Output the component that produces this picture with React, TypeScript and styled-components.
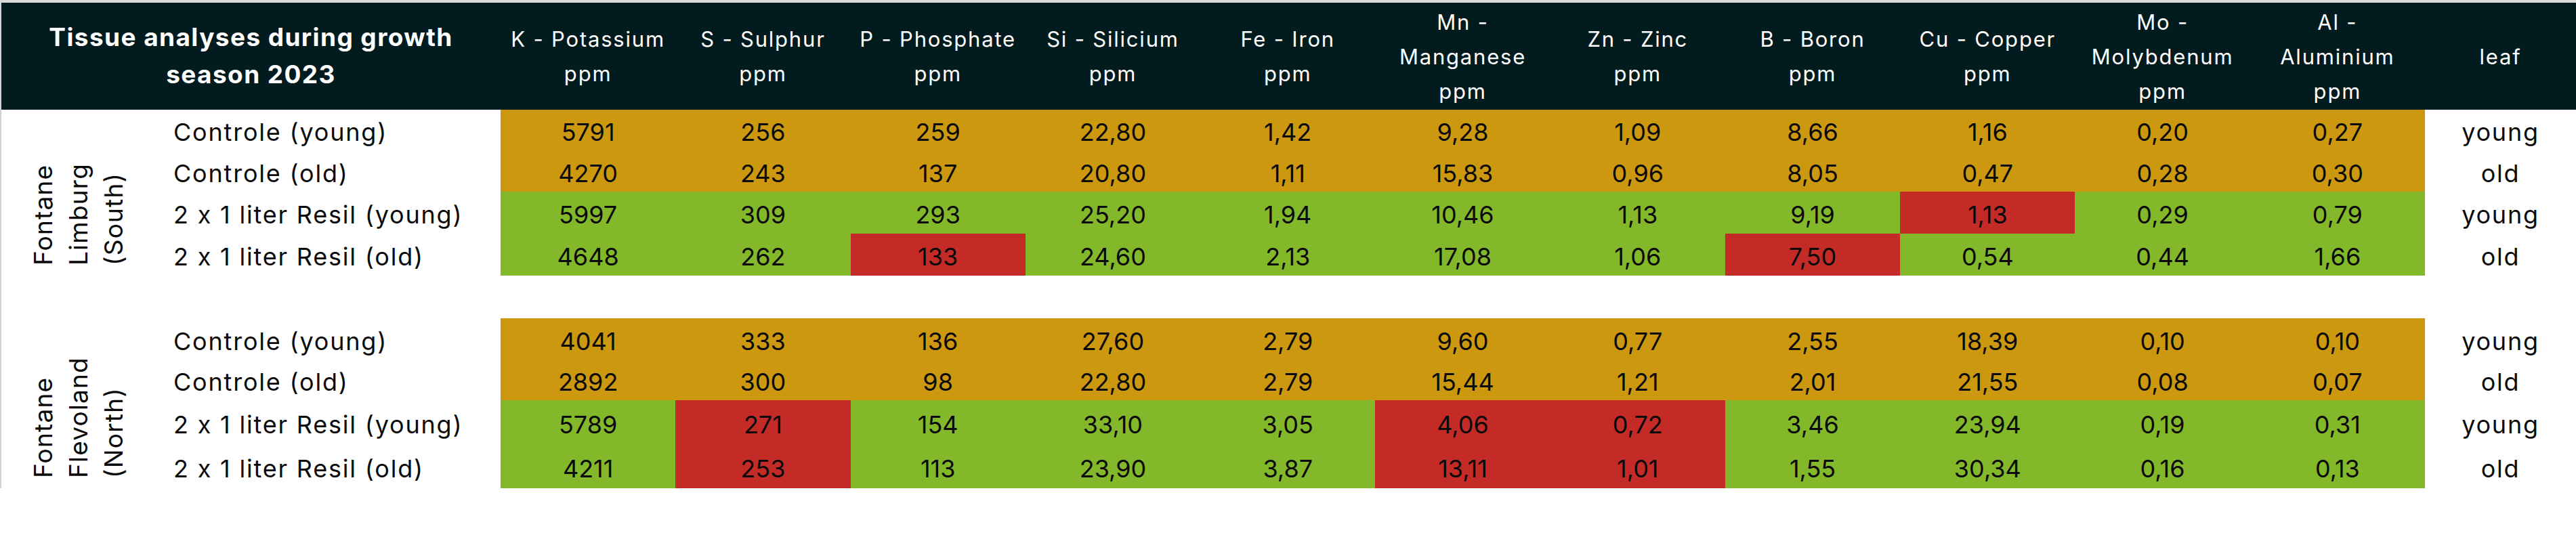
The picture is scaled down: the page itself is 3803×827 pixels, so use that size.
import React from 'react';
import styled, { createGlobalStyle } from 'styled-components';

const GlobalStyle = createGlobalStyle`
  html, body {
    margin: 0;
    padding: 0;
    background: #ffffff;
  }
  body {
    font-family: Inter, "Open Sans", "Liberation Sans", sans-serif;
    color: #0a0a0a;
  }
  * { box-sizing: border-box; }
`;

const COLS = '238px 499px repeat(11, minmax(0, 1fr)) 223px';

const COLORS = {
  header: '#021b1e',
  control: '#cb980f',
  resil: '#83b82a',
  low: '#c42b27',
};

type Tone = 'control' | 'resil';

interface RowData {
  label: string;
  leaf: string;
  tone: Tone;
  values: string[];
  low?: number[];
}

interface GroupData {
  region: string[];
  rows: RowData[];
  heights: number[];
}

const HEADERS: string[][] = [
  ['K - Potassium', 'ppm'],
  ['S - Sulphur', 'ppm'],
  ['P - Phosphate', 'ppm'],
  ['Si - Silicium', 'ppm'],
  ['Fe - Iron', 'ppm'],
  ['Mn -', 'Manganese', 'ppm'],
  ['Zn - Zinc', 'ppm'],
  ['B - Boron', 'ppm'],
  ['Cu - Copper', 'ppm'],
  ['Mo -', 'Molybdenum', 'ppm'],
  ['Al -', 'Aluminium', 'ppm'],
];

const GROUPS: GroupData[] = [
  {
    region: ['Fontane', 'Limburg', '(South)'],
    heights: [60, 61, 62, 62],
    rows: [
      {
        label: 'Controle (young)',
        leaf: 'young',
        tone: 'control',
        values: ['5791', '256', '259', '22,80', '1,42', '9,28', '1,09', '8,66', '1,16', '0,20', '0,27'],
      },
      {
        label: 'Controle (old)',
        leaf: 'old',
        tone: 'control',
        values: ['4270', '243', '137', '20,80', '1,11', '15,83', '0,96', '8,05', '0,47', '0,28', '0,30'],
      },
      {
        label: '2 x 1 liter Resil (young)',
        leaf: 'young',
        tone: 'resil',
        values: ['5997', '309', '293', '25,20', '1,94', '10,46', '1,13', '9,19', '1,13', '0,29', '0,79'],
        low: [8],
      },
      {
        label: '2 x 1 liter Resil (old)',
        leaf: 'old',
        tone: 'resil',
        values: ['4648', '262', '133', '24,60', '2,13', '17,08', '1,06', '7,50', '0,54', '0,44', '1,66'],
        low: [2, 7],
      },
    ],
  },
  {
    region: ['Fontane', 'Flevoland', '(North)'],
    heights: [61, 60, 65, 65],
    rows: [
      {
        label: 'Controle (young)',
        leaf: 'young',
        tone: 'control',
        values: ['4041', '333', '136', '27,60', '2,79', '9,60', '0,77', '2,55', '18,39', '0,10', '0,10'],
      },
      {
        label: 'Controle (old)',
        leaf: 'old',
        tone: 'control',
        values: ['2892', '300', '98', '22,80', '2,79', '15,44', '1,21', '2,01', '21,55', '0,08', '0,07'],
      },
      {
        label: '2 x 1 liter Resil (young)',
        leaf: 'young',
        tone: 'resil',
        values: ['5789', '271', '154', '33,10', '3,05', '4,06', '0,72', '3,46', '23,94', '0,19', '0,31'],
        low: [1, 5, 6],
      },
      {
        label: '2 x 1 liter Resil (old)',
        leaf: 'old',
        tone: 'resil',
        values: ['4211', '253', '113', '23,90', '3,87', '13,11', '1,01', '1,55', '30,34', '0,16', '0,13'],
        low: [1, 5, 6],
      },
    ],
  },
];

const Page = styled.div`
  width: 3803px;
  min-height: 827px;
  background: #ffffff;
`;

const TopRule = styled.div`
  height: 4px;
  background: #d9d9d9;
`;

const Table = styled.div`
  border-left: 2px solid #d3d3d3;
`;

const HeaderRow = styled.div`
  display: grid;
  grid-template-columns: ${COLS};
  height: 158px;
  background: ${COLORS.header};
  color: #ffffff;
`;

const TitleCell = styled.div`
  grid-column: 1 / 3;
  display: flex;
  align-items: center;
  justify-content: center;
  text-align: center;
  font-weight: 700;
  font-size: 37px;
  line-height: 55px;
  letter-spacing: 1.4px;
  padding-bottom: 2px;
`;

const HeaderCell = styled.div`
  display: flex;
  align-items: center;
  justify-content: center;
  text-align: center;
  font-size: 31px;
  line-height: 51px;
  letter-spacing: 1.8px;
  font-weight: 400;
  white-space: nowrap;
`;

const Group = styled.section<{ $rows: string }>`
  display: grid;
  grid-template-columns: ${COLS};
  grid-template-rows: ${(p) => p.$rows};
`;

const Spacer = styled.div`
  height: 63px;
`;

const RegionCell = styled.div`
  grid-column: 1;
  grid-row: 1 / -1;
  display: flex;
  align-items: stretch;
  padding-left: 36px;
`;

const RegionLabel = styled.div`
  writing-mode: vertical-rl;
  transform: rotate(180deg);
  font-size: 37px;
  line-height: 52px;
  letter-spacing: 1.2px;
  padding-top: 15px;
  white-space: nowrap;
  color: #0a0a0a;
`;

const LabelCell = styled.div`
  display: flex;
  align-items: center;
  padding-left: 16px;
  padding-top: 6px;
  font-size: 36px;
  letter-spacing: 1.8px;
  white-space: nowrap;
`;

const ValueCell = styled.div<{ $bg: string }>`
  display: flex;
  align-items: center;
  justify-content: center;
  padding-top: 6px;
  background: ${(p) => p.$bg};
  font-size: 36px;
  white-space: nowrap;
  color: #0a0a0a;
`;

const LeafCell = styled.div`
  display: flex;
  align-items: center;
  justify-content: center;
  padding-top: 6px;
  font-size: 36px;
  letter-spacing: 1.8px;
`;

function cellColor(row: RowData, i: number): string {
  if (row.low && row.low.includes(i)) return COLORS.low;
  return COLORS[row.tone];
}

function GroupBlock({ group }: { group: GroupData }) {
  return (
    <Group $rows={group.heights.map((h) => `${h}px`).join(' ')}>
      <RegionCell>
        <RegionLabel>
          {group.region.map((line, i) => (
            <React.Fragment key={line}>
              {i > 0 && <br />}
              {line}
            </React.Fragment>
          ))}
        </RegionLabel>
      </RegionCell>
      {group.rows.map((row) => (
        <React.Fragment key={row.label}>
          <LabelCell>{row.label}</LabelCell>
          {row.values.map((v, i) => (
            <ValueCell key={i} $bg={cellColor(row, i)}>
              {v}
            </ValueCell>
          ))}
          <LeafCell>{row.leaf}</LeafCell>
        </React.Fragment>
      ))}
    </Group>
  );
}

export default function App() {
  return (
    <>
      <GlobalStyle />
      <Page>
        <TopRule />
        <Table>
          <HeaderRow>
            <TitleCell>
              Tissue analyses during growth
              <br />
              season 2023
            </TitleCell>
            {HEADERS.map((lines) => (
              <HeaderCell key={lines.join(' ')}>
                <div>
                  {lines.map((l, i) => (
                    <React.Fragment key={l}>
                      {i > 0 && <br />}
                      {l}
                    </React.Fragment>
                  ))}
                </div>
              </HeaderCell>
            ))}
            <HeaderCell>leaf</HeaderCell>
          </HeaderRow>
          <GroupBlock group={GROUPS[0]} />
          <Spacer />
          <GroupBlock group={GROUPS[1]} />
        </Table>
      </Page>
    </>
  );
}
